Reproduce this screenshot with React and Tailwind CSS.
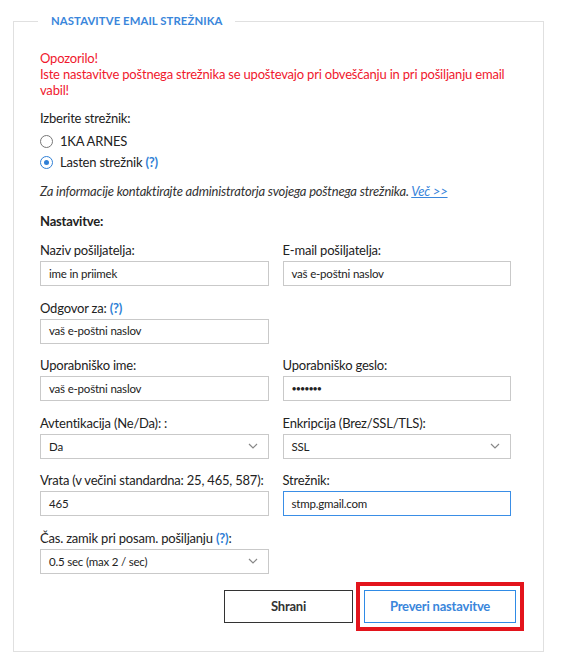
import React from 'react';

const Chevron = () => (
  <svg className="absolute right-[10px] top-1/2 -translate-y-1/2 pointer-events-none" width="10" height="6" viewBox="0 0 10 6" fill="none">
    <path d="M1 1l4 4 4-4" stroke="#888" strokeWidth="1.2" />
  </svg>
);

const Help = () => <span className="text-[#2f7fd6] font-bold">(?)</span>;

const Field = ({ label, children }) => (
  <div className="flex flex-col">
    <label className="text-[13px] leading-[18px] tracking-[-0.2px] whitespace-nowrap text-[#222] mb-[2px]">{label}</label>
    {children}
  </div>
);

const Input = ({ value, focus }) => (
  <div
    className={`h-[25px] border flex items-center px-[8px] text-[11.5px] text-[#222] ${
      focus ? 'border-[#3a8ee6]' : 'border-[#c9c9c9]'
    }`}
  >
    {value}
  </div>
);

const Select = ({ value }) => (
  <div className="relative h-[25px] border border-[#c9c9c9] flex items-center px-[8px] text-[11.5px] text-[#222]">
    {value}
    <Chevron />
  </div>
);

const Radio = ({ checked, children }) => (
  <div className="flex items-center gap-[7px] h-[21px]">
    <span
      className={`w-[13px] h-[13px] rounded-full border flex items-center justify-center ${
        checked ? 'border-[#2f7fd6]' : 'border-[#777]'
      }`}
    >
      {checked && <span className="w-[5px] h-[5px] rounded-full bg-[#2f7fd6]" />}
    </span>
    <span className="text-[13px] text-[#222]">{children}</span>
  </div>
);

export default function App() {
  return (
    <div className="bg-white w-[561px] h-[670px] pt-[13px] pl-[13px]" style={{ fontFamily: 'Lato, "Noto Sans", sans-serif' }}>
      <fieldset className="w-[531px] h-[639px] border border-[#e0e0e0] px-[26px] pt-[20px] tracking-[-0.2px]">
        <legend className="-ml-[2px] px-[13px] text-[11.3px] font-bold text-[#3a86db] tracking-[0.1px]">
          NASTAVITVE EMAIL STREŽNIKA
        </legend>

        <div className="text-[13px] leading-[16px] text-[#f0182d]">
          <p>Opozorilo!</p>
          <p>Iste nastavitve poštnega strežnika se upoštevajo pri obveščanju in pri pošiljanju email vabil!</p>
        </div>

        <p className="mt-[11px] text-[13px] leading-[18px] text-[#222]">Izberite strežnik:</p>
        <div className="mt-[4px]">
          <Radio>1KA ARNES</Radio>
          <Radio checked>
            Lasten strežnik <Help />
          </Radio>
        </div>

        <p className="mt-[9px] text-[13px] leading-[18px] italic text-[#333]">
          Za informacije kontaktirajte administratorja svojega poštnega strežnika.{' '}
          <a className="text-[#3a86db] underline">Več &gt;&gt;</a>
        </p>

        <p className="mt-[12px] text-[13px] leading-[18px] font-bold text-[#222]">Nastavitve:</p>

        <div className="mt-[11px] w-[471px] grid grid-cols-2 gap-x-[14px] gap-y-[12.6px]">
          <Field label="Naziv pošiljatelja:">
            <Input value="ime in priimek" />
          </Field>
          <Field label="E-mail pošiljatelja:">
            <Input value="vaš e-poštni naslov" />
          </Field>
          <Field label={<>Odgovor za: <Help /></>}>
            <Input value="vaš e-poštni naslov" />
          </Field>
          <div />
          <Field label="Uporabniško ime:">
            <Input value="vaš e-poštni naslov" />
          </Field>
          <Field label="Uporabniško geslo:">
            <Input value={<span className="tracking-[-1px] text-[9px]">•••••••</span>} />
          </Field>
          <Field label="Avtentikacija (Ne/Da): :">
            <Select value="Da" />
          </Field>
          <Field label="Enkripcija (Brez/SSL/TLS):">
            <Select value="SSL" />
          </Field>
          <Field label="Vrata (v večini standardna: 25, 465, 587):">
            <Input value="465" />
          </Field>
          <Field label="Strežnik:">
            <Input value="stmp.gmail.com" focus />
          </Field>
          <Field label={<>Čas. zamik pri posam. pošiljanju <Help />:</>}>
            <Select value="0.5 sec (max 2 / sec)" />
          </Field>
        </div>

        <div className="mt-[8px] flex justify-end gap-[3px] pr-[2px]">
          <div className="py-[8px]">
            <button className="w-[129px] h-[33px] border border-[#333] text-[13px] font-bold text-[#333]">Shrani</button>
          </div>
          <div className="border-[4px] border-[#e3141c] p-[4px] -mr-[9px]">
            <button className="w-[152px] h-[33px] border border-[#2f8be6] text-[13px] font-bold text-[#3a86db]">
              Preveri nastavitve
            </button>
          </div>
        </div>
      </fieldset>
    </div>
  );
}
